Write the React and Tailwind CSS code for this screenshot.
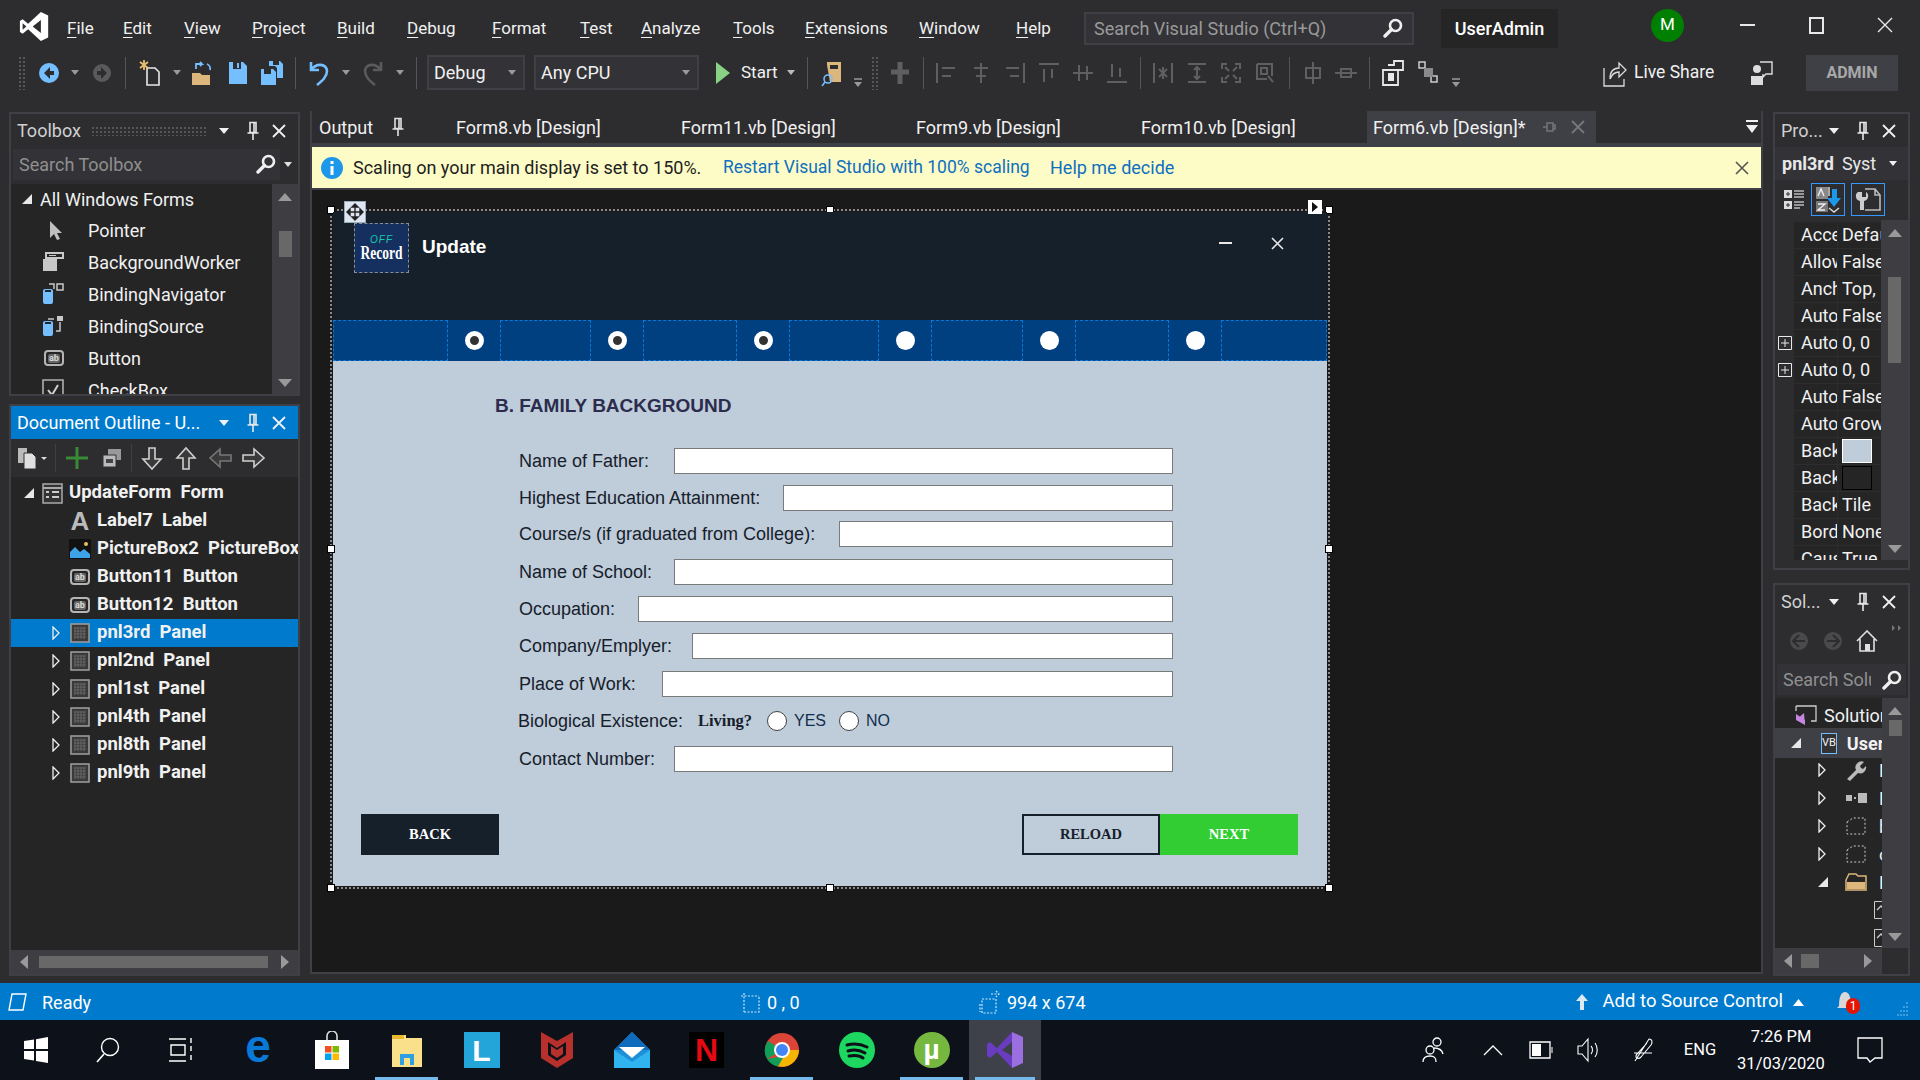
import React from "react";

const Svg = ({ w = 20, h = 20, vb, children, className = "" }) => (
  <svg width={w} height={h} viewBox={vb || `0 0 ${w} ${h}`} fill="none" className={`shrink-0 ${className}`}>{children}</svg>
);
const Caret = ({ c = "#d0d0d0", w = 10, h = 6 }) => <Svg w={w} h={h}><path d={`M0 0H${w}L${w / 2} ${h}z`} fill={c} /></Svg>;
const Pin = ({ c = "#e8e8e8" }) => (
  <Svg w={14} h={20}><path d="M4 1.5h6v10H4zM1.5 12h11M7 12v7M8 2v9" stroke={c} strokeWidth="1.6" /></Svg>
);
const Close = ({ c = "#f0f0f0", s = 14, sw = 1.8 }) => (
  <Svg w={s} h={s}><path d={`M1 1L${s - 1} ${s - 1}M${s - 1} 1L1 ${s - 1}`} stroke={c} strokeWidth={sw} /></Svg>
);
const Mag = ({ s = 20 }) => (
  <Svg w={s} h={s} vb="0 0 20 20"><circle cx="12.5" cy="7.5" r="5.5" stroke="#f0f0f0" strokeWidth="2.6" /><path d="M8.5 11.5L2 18" stroke="#f0f0f0" strokeWidth="3.4" strokeLinecap="round" /></Svg>
);
const Grip = ({ className = "" }) => (
  <div className={`bg-[radial-gradient(#55555a_1px,transparent_1px)] bg-[length:4px_4px] ${className}`} />
);
const S = ({ className = "", children }) => <div className={`flex items-center justify-center shrink-0 ${className}`}>{children}</div>;
const Sep = ({ className = "" }) => <S className={className}><div className="w-px h-[32px] bg-[#555558]" /></S>;
const SmallDrop = () => (
  <Svg w={10} h={16}><path d="M1 7h8" stroke="#999" strokeWidth="1.5" /><path d="M1 10h8l-4 5z" fill="#999" /></Svg>
);
const GCaret = ({ c = "#999" }) => <Caret c={c} w={8} h={5} />;

const Grey = ({ d, fill }) => (
  <Svg w={24} h={24}><path d={d} stroke="#5f5f62" strokeWidth="2" fill={fill || "none"} /></Svg>
);

function VSLogo({ s = 34, a = "#fff" }) {
  return (
    <Svg w={s} h={s} vb="0 0 34 34">
      <path d="M24 1L32 5V29L24 33L10 20L4 25L1 23V11L4 9L10 14zM24 10L15 17L24 24z" fill={a} fillRule="evenodd" />
      <path d="M4 13.5V20.5L8 17z" fill="#2d2d30" />
    </Svg>
  );
}

const Menu = [
  ["F", "ile", "", "w-[56px]"], ["E", "dit", "", "w-[61px]"], ["V", "iew", "", "w-[68px]"], ["P", "roject", "", "w-[85px]"],
  ["B", "uild", "", "w-[70px]"], ["D", "ebug", "", "w-[85px]"], ["F", "ormat", "", "w-[88px]"], ["T", "est", "", "w-[61px]"],
  ["A", "nalyze", "", "w-[92px]"], ["T", "ools", "", "w-[72px]"], ["E", "xtensions", "", "w-[114px]"], ["W", "indow", "", "w-[97px]"], ["H", "elp", "", "w-[68px]"],
];

function TitleBar() {
  return (
    <div className="flex items-center h-[50px] shrink-0 pl-[19px]">
      <div className="mt-[2px]"><VSLogo s={31} /></div>
      <div className="flex ml-[17px] mt-[8px] text-[#f1f1f1] text-[17px]">
        {Menu.map(([a, b, , w], i) => (
          <div key={i} className={`${w} shrink-0`}><span className="underline underline-offset-[3px] decoration-1">{a}</span>{b}</div>
        ))}
      </div>
      <div className="flex items-center justify-between mt-[6px] w-[330px] h-[33px] border-2 border-[#3f3f46] bg-[#333337] pl-[8px] pr-[9px] text-[#9a9a9a] text-[18px] shrink-0">
        <span>Search Visual Studio (Ctrl+Q)</span><Mag />
      </div>
      <div className="ml-[27px] mt-[7px] w-[117px] h-[39px] bg-[#252526] text-white font-medium text-[18px] flex items-center justify-center shrink-0">UserAdmin</div>
      <div className="ml-[93px] w-[33px] h-[33px] rounded-full bg-[#008000] text-white text-[17px] flex items-center justify-center shrink-0">M</div>
      <S className="ml-[53px] w-[20px]"><div className="w-[15px] h-[2px] bg-[#e8e8e8]" /></S>
      <S className="ml-[49px] w-[20px]"><div className="w-[15px] h-[17px] border-2 border-[#e8e8e8]" /></S>
      <S className="ml-[49px] w-[20px]"><Close s={16} c="#e8e8e8" sw={1.4} /></S>
    </div>
  );
}

function Toolbar() {
  return (
    <div className="flex items-center h-[45px] shrink-0 pl-[16px] text-[#f1f1f1] text-[18px]">
      <S className="w-[12px]"><Grip className="w-[8px] h-[34px]" /></S>
      <S className="w-[26px] ml-[8px]">
        <Svg w={22} h={22}><circle cx="11" cy="11" r="10" fill="#75beff" /><path d="M12 5L6 11l6 6v-4h4V9h-4z" fill="#2d2d30" /></Svg>
      </S>
      <S className="w-[26px]"><GCaret /></S>
      <S className="w-[28px]"><Svg w={20} h={20}><circle cx="10" cy="10" r="9" fill="#5a5a5c" /><path d="M9 4l6 6-6 6v-4H5V8h4z" fill="#2d2d30" /></Svg></S>
      <Sep className="w-[18px]" />
      <S className="w-[32px]">
        <Svg w={22} h={28}><path d="M8 9h8l4 4v13H8z" stroke="#e8e8e8" strokeWidth="1.6" /><path d="M5 1v10M1 3l8 6M9 3l-8 6" stroke="#e8c070" strokeWidth="1.8" /></Svg>
      </S>
      <S className="w-[22px]"><GCaret /></S>
      <S className="w-[30px]">
        <Svg w={24} h={28}><path d="M1 14h8l2 2h8v10H1z" fill="#dcb67a" /><path d="M5 10V5h6l-2-2M11 5l-2 2M16 5a5 5 0 0 1 3 6" stroke="#75beff" strokeWidth="1.8" /></Svg>
      </S>
      <S className="w-[40px]">
        <Svg w={20} h={24}><path d="M1 1h14l4 4v18H1z" fill="#75beff" /><path d="M5 1h8v7H5z" fill="#2d2d30" /><path d="M9 2h2v5H9z" fill="#75beff" /></Svg>
      </S>
      <S className="w-[28px]">
        <Svg w={24} h={26}><path d="M1 9h12l3 3v13H1z" fill="#75beff" /><path d="M9 1h11l3 3v14h-6V8L15 6H9z" fill="#75beff" /><path d="M4 9h7v5H4zM13 1h6v4h-6z" fill="#2d2d30" /></Svg>
      </S>
      <Sep className="w-[18px]" />
      <S className="w-[30px]">
        <Svg w={22} h={28}><path d="M3 3v8h8M3 11C8 4 18 4 19 12c0 6-5 10-10 14" stroke="#75beff" strokeWidth="2.6" /></Svg>
      </S>
      <S className="w-[24px]"><GCaret /></S>
      <S className="w-[30px]">
        <Svg w={22} h={28}><path d="M19 3v8h-8M19 11C14 4 4 4 3 12c0 6 5 10 10 14" stroke="#5a5a5c" strokeWidth="2.6" /></Svg>
      </S>
      <S className="w-[24px]"><GCaret /></S>
      <Sep className="w-[8px]" />
      <div className="ml-[7px] w-[98px] h-[35px] border-2 border-[#3f3f46] bg-[#333337] flex items-center justify-between pl-[5px] pr-[7px] shrink-0"><span>Debug</span><GCaret /></div>
      <div className="ml-[9px] w-[165px] h-[35px] border-2 border-[#3f3f46] bg-[#333337] flex items-center justify-between pl-[5px] pr-[7px] shrink-0"><span>Any CPU</span><GCaret /></div>
      <S className="ml-[15px] w-[17px]"><Svg w={14} h={22}><path d="M0 0L14 11L0 22z" fill="#89d185" /></Svg></S>
      <div className="ml-[10px] w-[43px] shrink-0 text-[17px]">Start</div>
      <S className="w-[14px]"><GCaret c="#bbb" /></S>
      <Sep className="w-[18px]" />
      <S className="w-[32px]">
        <Svg w={22} h={28}><path d="M6 6V3h14v20H9" fill="#dcb67a" /><path d="M9 6h8v4H9z" fill="#2d2d30" /><circle cx="7" cy="20" r="4" stroke="#75beff" strokeWidth="1.6" /><path d="M4 23l-3 4" stroke="#75beff" strokeWidth="1.6" /></Svg>
      </S>
      <S className="w-[20px] pt-[14px]"><SmallDrop /></S>
      <S className="w-[14px]"><Grip className="w-[8px] h-[34px]" /></S>
      <S className="w-[36px]"><Svg w={20} h={24}><path d="M10 1v22M1 11h18" stroke="#5f5f62" strokeWidth="5" /></Svg></S>
      <Sep className="w-[10px]" />
      {[
        "M3 2v20M8 7h13M8 15h9", "M12 2v20M5 7h14M7 15h10", "M21 2v20M3 7h13M7 15h9", "M2 3h20M7 8v13M15 8v9", "M2 12h20M8 4v16M16 5v14", "M2 21h20M7 3v13M15 7v9",
      ].map((d, i) => <S key={i} className={i === 0 ? "w-[36px]" : "w-[34px]"}><Grey d={d} /></S>)}
      <Sep className="w-[12px]" />
      {[
        "M3 2v20M21 2v20M12 6v12M8 8l8 8M16 8l-8 8", "M3 3h18M3 21h18M12 6v12M9 9l3-3 3 3M9 15l3 3 3-3", "M3 8V3h5M21 8V3h-5M3 16v5h5M21 16v5h-5M6 6l4 4M18 6l-4 4M6 18l4-4M18 18l-4-4", "M4 3h15v12M4 3v15h10M15 15l5 6M8 7h6v6H8z",
      ].map((d, i) => <S key={i} className="w-[34px]"><Grey d={d} /></S>)}
      <Sep className="w-[14px]" />
      <S className="w-[33px]"><Grey d="M12 1v22M5 7h14v10H5z" /></S>
      <S className="w-[34px]"><Grey d="M1 12h22M7 8h10v8H7z" /></S>
      <Sep className="w-[12px]" />
      <S className="w-[36px]">
        <Svg w={24} h={28}><path d="M7 6h6V2h9v9h-5M2 11h15v15H2z" stroke="#e8e8e8" strokeWidth="1.8" /><path d="M7 14h6v8H7z" fill="#e8e8e8" /></Svg>
      </S>
      <S className="w-[35px]">
        <Svg w={22} h={28}><path d="M1 3h6v6H1zM13 17h6v6h-6z" stroke="#ccc" strokeWidth="1.5" /><path d="M6 9h9v9H6z" fill="#8a8a8a" /></Svg>
      </S>
      <S className="w-[20px] pt-[14px]"><SmallDrop /></S>
      <S className="ml-[136px] w-[26px]">
        <Svg w={24} h={30}><path d="M1 10v18h20V21M7 21c0-8 4-11 9-11V5l7 7-7 7v-5c-4 0-7 2-9 7z" stroke="#dcdcdc" strokeWidth="1.3" /></Svg>
      </S>
      <div className="ml-[6px] w-[116px] shrink-0 text-[17.5px]">Live Share</div>
      <S className="w-[24px]">
        <Svg w={24} h={28}><path d="M10 3h12v12h-6l-3 3v-3" stroke="#dcdcdc" strokeWidth="1.4" /><circle cx="7" cy="10" r="4" fill="#dcdcdc" /><path d="M1 17h12v9H1z" fill="#dcdcdc" /></Svg>
      </S>
      <div className="ml-[32px] w-[92px] h-[36px] bg-[#3f3f46] text-[#a8a8a8] font-bold text-[16px] flex items-center justify-center shrink-0">ADMIN</div>
    </div>
  );
}

function PanelHead({ title, active, grip }) {
  return (
    <div className={`flex items-center h-[33px] shrink-0 ${active ? "bg-[#007acc] text-white" : "bg-[#2d2d30] text-[#d0d0d0]"} text-[18px]`}>
      <span className="ml-[6px] whitespace-nowrap shrink-0">{title}</span>
      {grip && <Grip className="ml-[10px] w-[115px] h-[10px]" />}
      <div className="ml-auto flex items-center mr-[12px]">
        <Caret c="#f0f0f0" />
        <div className="ml-[17px]"><Pin /></div>
        <div className="ml-[12px]"><Close /></div>
      </div>
    </div>
  );
}

const AB = () => (
  <div className="w-[20px] h-[16px] rounded-[4px] border-2 border-[#b5b5b5] flex items-center justify-center shrink-0">
    <span className="text-[9px] leading-none font-bold text-[#d8d8d8] bg-[#666] rounded-[2px] px-[1px]">ab</span>
  </div>
);

const ToolIcon = ({ kind }) => {
  if (kind === "pointer") return <Svg w={16} h={20}><path d="M2 1l12 12H9l3 6-3 1-3-6-4 4z" fill="#c0c0c0" /></Svg>;
  if (kind === "bg") return <Svg w={22} h={22}><path d="M3 1h19v7H15v12H1V8h2z" fill="#c8c8c8" /><path d="M5 3h15v3H5z" fill="#252526" /><path d="M7 4h7v1H7z" fill="#c8c8c8" /></Svg>;
  if (kind === "nav") return <Svg w={22} h={22}><rect x="1" y="6" width="10" height="15" rx="2" fill="#75beff" /><path d="M3 8h6" stroke="#252526" strokeWidth="2" /><path d="M7 1h5v5M15 1h6v6h-6z" stroke="#c8c8c8" strokeWidth="1.5" /></Svg>;
  if (kind === "src") return <Svg w={22} h={22}><rect x="1" y="6" width="10" height="15" rx="2" fill="#75beff" /><path d="M3 8h6" stroke="#252526" strokeWidth="2" /><path d="M15 1h6v5h-6z" fill="#c8c8c8" /><path d="M18 7v9h-4M6 4h6" stroke="#c8c8c8" strokeWidth="1.5" /></Svg>;
  if (kind === "button") return <AB />;
  return <Svg w={22} h={22}><path d="M1 1h20v20H1z" stroke="#b0b0b0" strokeWidth="1.6" /><path d="M6 11l4 5 6-10" stroke="#d0d0d0" strokeWidth="2" /></Svg>;
};

function ScrollV({ className, top, thumb, color = "bg-[#686868]" }) {
  return (
    <div className={`${className} bg-[#3e3e42] flex flex-col items-center shrink-0 relative pt-[9px]`}>
      <Svg w={14} h={8}><path d="M7 0L14 8H0z" fill="#999" /></Svg>
      <div className={`${top} ${thumb} w-[13px] ${color}`} />
      <div className="absolute bottom-[7px]"><Svg w={14} h={8}><path d="M0 0H14L7 8z" fill="#999" /></Svg></div>
    </div>
  );
}

function Toolbox() {
  const items = [["pointer", "Pointer"], ["bg", "BackgroundWorker"], ["nav", "BindingNavigator"], ["src", "BindingSource"], ["button", "Button"], ["cb", "CheckBox"]];
  return (
    <div className="flex flex-col h-[284px] border-2 border-[#3f3f46] shrink-0 overflow-hidden">
      <PanelHead title="Toolbox" grip />
      <div className="flex items-center h-[34px] bg-[#2d2d30] shrink-0">
        <div className="flex items-center justify-between w-[267px] h-[31px] bg-[#333337] ml-[2px] pl-[6px] pr-[4px] text-[#8f8f8f] text-[18px]"><span>Search Toolbox</span><Mag /></div>
        <div className="ml-[4px]"><Caret c="#e0e0e0" w={8} h={5} /></div>
      </div>
      <div className="flex flex-1 min-h-0 mt-[3px]">
        <div className="flex-1 bg-[#252526] text-[#f1f1f1] text-[18px] overflow-hidden">
          <div className="flex items-center h-[30px] pl-[11px]">
            <Svg w={10} h={10}><path d="M10 0V10H0z" fill="#e8e8e8" /></Svg>
            <span className="ml-[8px]">All Windows Forms</span>
          </div>
          {items.map(([k, t]) => (
            <div key={t} className="flex items-center h-[32px]">
              <div className="w-[53px] flex justify-end shrink-0"><ToolIcon kind={k} /></div>
              <span className="ml-[24px]">{t}</span>
            </div>
          ))}
        </div>
        <ScrollV className="w-[26px]" top="mt-[30px]" thumb="h-[26px]" />
      </div>
    </div>
  );
}

const PanelGlyph = () => (
  <Svg w={20} h={20}><rect x="1" y="1" width="18" height="18" stroke="#999" strokeWidth="1.6" fill="#3a3a3a" /><path d="M4 5h12M4 8h12M4 11h12M4 14h12M5 4v12M8 4v12M11 4v12M14 4v12" stroke="#666" strokeWidth="1" /></Svg>
);
const RightTri = () => <Svg w={8} h={14}><path d="M1 1L7 7L1 13z" stroke="#f0f0f0" strokeWidth="1.3" /></Svg>;

function Outline() {
  const Row = ({ arrow, tri, icon, text, sel, indent = "pl-[58px]" }) => (
    <div className={`flex items-center h-[28px] font-bold text-[18.5px] text-[#f1f1f1] relative ${sel ? "bg-[#007acc]" : ""} ${indent}`}>
      {arrow && <div className="absolute left-[41px] top-[7px]"><RightTri /></div>}
      {tri && <div className="absolute left-[13px] top-[9px]"><Svg w={10} h={10}><path d="M10 0V10H0z" fill="#e8e8e8" /></Svg></div>}
      <div className="w-[22px] flex justify-center shrink-0">{icon}</div>
      <span className="ml-[6px] whitespace-pre">{text}</span>
    </div>
  );
  const arrows = [
    "M9 2h6v11h6L12 23 3 13h6z",
    "M9 23h6V12h6L12 2 3 12h6z",
    "M23 9v6H12v6L2 12l10-9v6z",
    "M1 9v6h11v6l10-9-10-9v6z",
  ];
  return (
    <div className="flex flex-col h-[572px] border-2 border-[#3f3f46] mt-[8px] shrink-0 overflow-hidden">
      <PanelHead title="Document Outline - U..." active />
      <div className="flex items-center h-[38px] bg-[#2d2d30] shrink-0 pl-[6px]">
        <Svg w={32} h={24}><path d="M1 2h9v15H1z" fill="#bbb" /><path d="M7 7h8l4 4v12H7z" fill="#e0e0e0" stroke="#333" /><path d="M24 11h6l-3 3z" fill="#ddd" /></Svg>
        <div className="w-px h-[28px] bg-[#3f3f46] ml-[6px]" />
        <div className="ml-[9px]"><Svg w={24} h={24}><path d="M12 1v22M1 12h22" stroke="#388a34" strokeWidth="3" /></Svg></div>
        <div className="ml-[13px]"><Svg w={20} h={20}><path d="M6 1h13v11H6z" fill="#999" /><path d="M1 7h13v12H1z" fill="#bbb" stroke="#333" /><path d="M4 11h7v4H4z" fill="#444" /></Svg></div>
        <div className="w-px h-[28px] bg-[#3f3f46] ml-[9px]" />
        {arrows.map((d, i) => (
          <div key={i} className={i === 0 ? "ml-[8px]" : "ml-[10px]"}>
            <Svg w={24} h={24}><path d={d} fill="#3a3a3a" stroke={i === 2 ? "#777" : "#cfcfcf"} strokeWidth="1.6" /></Svg>
          </div>
        ))}
      </div>
      <div className="flex-1 bg-[#252526] flex flex-col min-h-0">
        <div className="pt-[2px] flex-1 overflow-hidden">
          <Row indent="pl-[30px]" tri icon={<Svg w={21} h={21}><rect x="1" y="1" width="19" height="19" stroke="#aaa" strokeWidth="1.5" fill="#333" /><path d="M1 5h19" stroke="#aaa" strokeWidth="2" /><path d="M4 9h3M4 14h3M10 9h7M10 14h7" stroke="#ccc" strokeWidth="2.2" /></Svg>} text="UpdateForm  Form" />
          <Row icon={<span className="text-[26px] leading-none font-bold text-[#bbb] font-['Liberation_Sans',Arial,sans-serif]">A</span>} text="Label7  Label" />
          <Row icon={<Svg w={22} h={20}><path d="M0 0h22v20H0z" fill="#111" /><path d="M1 19v-6l5-5 5 5 4-3 6 5v4z" fill="#3ea2e8" /><circle cx="17" cy="5" r="2" fill="#e8c060" /></Svg>} text="PictureBox2  PictureBox" />
          <Row icon={<AB />} text="Button11  Button" />
          <Row icon={<AB />} text="Button12  Button" />
          {["pnl3rd", "pnl2nd", "pnl1st", "pnl4th", "pnl8th", "pnl9th"].map((n, i) => (
            <Row key={n} arrow sel={i === 0} icon={<PanelGlyph />} text={`${n}  Panel`} />
          ))}
        </div>
        <div className="flex items-center h-[24px] bg-[#3e3e42] shrink-0 px-[9px]">
          <Svg w={8} h={14}><path d="M8 0V14L0 7z" fill="#999" /></Svg>
          <div className="ml-[11px] w-[229px] h-[12px] bg-[#686868]" />
          <div className="ml-auto"><Svg w={8} h={14}><path d="M0 0V14L8 7z" fill="#999" /></Svg></div>
        </div>
      </div>
    </div>
  );
}

function Tabs() {
  const tabs = [
    ["Form8.vb [Design]", "w-[225px]"], ["Form11.vb [Design]", "w-[235px]"], ["Form9.vb [Design]", "w-[225px]"], ["Form10.vb [Design]", "w-[227px]"],
  ];
  return (
    <div className="flex items-center h-[32px] shrink-0 text-[#f1f1f1] text-[18px] relative">
      <span className="ml-[7px] w-[72px] shrink-0">Output</span>
      <div className="w-[65px] shrink-0"><Pin c="#e0e0e0" /></div>
      {tabs.map(([t, w]) => <div key={t} className={`${w} shrink-0 whitespace-nowrap`}>{t}</div>)}
      <div className="flex items-center bg-[#3f3f46] h-[32px] w-[229px] pl-[6px] -ml-[1px] shrink-0 whitespace-nowrap">
        <span className="w-[163px] shrink-0">Form6.vb [Design]*</span>
        <div className="ml-[6px] opacity-50"><Svg w={14} h={14}><path d="M1 7h4M5 3h6v8H5zM11 5h2v4h-2z" stroke="#aaa" strokeWidth="1.5" /></Svg></div>
        <div className="ml-[15px]"><Close c="#77777b" s={14} sw={1.8} /></div>
      </div>
      <div className="ml-auto mr-[3px]"><Svg w={12} h={14}><path d="M0 1h12" stroke="#f0f0f0" strokeWidth="2" /><path d="M0 5h12L6 13z" fill="#f0f0f0" /></Svg></div>
    </div>
  );
}

function Notice() {
  return (
    <div className="flex items-center h-[41px] bg-[#fdfbc6] shrink-0 text-[18px] text-[#1e1e1e]">
      <div className="ml-[9px]">
        <Svg w={22} h={22}><circle cx="11" cy="11" r="11" fill="#1c97ea" /><path d="M9.500 9h3v9h-3zM9.500 4h3v3h-3z" fill="#fff" /></Svg>
      </div>
      <span className="ml-[10px] w-[350px] shrink-0 whitespace-nowrap">Scaling on your main display is set to 150%.</span>
      <span className="ml-[20px] w-[307px] shrink-0 whitespace-nowrap text-[17.5px] text-[#0e70c0]">Restart Visual Studio with 100% scaling</span>
      <span className="ml-[20px] text-[#0e70c0]">Help me decide</span>
      <div className="ml-auto mr-[12px]"><Close c="#555" s={14} sw={1.6} /></div>
    </div>
  );
}

const Handle = ({ className }) => <div className={`absolute w-[8px] h-[8px] bg-white border border-black ${className}`} />;

const FieldRows = [
  ["Name of Father:", "w-[499px]", "mt-[30px]"],
  ["Highest Education Attainment:", "w-[390px]", "mt-[11px]"],
  ["Course/s (if graduated from College):", "w-[334px]", "mt-[10px]"],
  ["Name of School:", "w-[499px]", "mt-[12px]"],
  ["Occupation:", "w-[535px]", "mt-[11px]"],
  ["Company/Emplyer:", "w-[481px]", "mt-[11px]"],
  ["Place of Work:", "w-[511px]", "mt-[12px]"],
];

const Field = ({ label, w, mt }) => (
  <div className={`flex items-center justify-between h-[26px] ${mt}`}>
    <span className="whitespace-nowrap pt-[1px]">{label}</span>
    <div className={`${w} h-[26px] bg-white border border-[#7a7a7a] shrink-0`} />
  </div>
);

const Radio = () => <div className="w-[20px] h-[20px] rounded-full bg-white border border-[#444] shrink-0" />;

function Step({ on }) {
  return (
    <div className="w-[52px] flex items-center justify-center shrink-0">
      {on ? <div className="w-[19px] h-[19px] rounded-full bg-[#333] border-[5px] border-white" /> : <div className="w-[19px] h-[19px] rounded-full bg-white" />}
    </div>
  );
}
const Seg = ({ w }) => <div className={`${w} h-full border border-dashed border-[#0a78d8] shrink-0`} />;

function FormDesign() {
  return (
    <div className="relative w-[994px] h-[674px] outline-[2px] outline-dotted outline-[#8a8a8a] outline-offset-[1px] font-['Liberation_Sans',Arial,sans-serif]">
      <Handle className="-left-[6px] -top-[6px]" />
      <Handle className="left-[493px] -top-[6px]" />
      <Handle className="-right-[6px] -top-[6px]" />
      <Handle className="-left-[6px] top-[333px]" />
      <Handle className="-right-[6px] top-[333px]" />
      <Handle className="-left-[6px] -bottom-[6px]" />
      <Handle className="left-[493px] -bottom-[6px]" />
      <Handle className="-right-[6px] -bottom-[6px]" />
      <div className="absolute left-[11px] -top-[11px] w-[22px] h-[22px] z-10 bg-[#dfe6f2] border border-[#9ab] flex items-center justify-center">
        <Svg w={18} h={18}><path d="M9 1v16M1 9h16M9 1l-3 3h6zM9 17l-3-3h6zM1 9l3-3v6zM17 9l-3-3v6z" stroke="#222" strokeWidth="1.4" fill="#222" /></Svg>
      </div>
      <div className="absolute right-[5px] -top-[12px] w-[14px] h-[14px] bg-white flex items-center justify-center z-10">
        <Svg w={8} h={10}><path d="M1 0L7 5L1 10z" fill="#111" /></Svg>
      </div>

      <div className="h-[108px] bg-[#16202b] flex pl-[21px] pt-[11px] relative">
        <div className="w-[55px] h-[50px] bg-[#15305f] border border-dashed border-[#8a8f96] flex flex-col items-center justify-center leading-none shrink-0">
          <span className="text-[10px] italic text-[#19c8a8] tracking-[1px]">OFF</span>
          <span className="text-[13.5px] font-bold text-white font-['Liberation_Serif',serif] scale-y-[1.35] mt-[2px]">Record</span>
        </div>
        <span className="ml-[13px] mt-[13px] text-[19px] font-bold text-white h-[22px] leading-[22px]">Update</span>
        <div className="ml-auto flex items-start pt-[14px] pr-[43px]">
          <div className="w-[13px] h-[2px] bg-[#e8e8e8] mt-[5px]" />
          <div className="ml-[39px]"><Close c="#e8e8e8" s={13} sw={1.6} /></div>
        </div>
      </div>

      <div className="h-[41px] bg-[#004080] flex">
        <Seg w="w-[115px]" /><Step on /><Seg w="w-[91px]" /><Step on /><Seg w="w-[94px]" /><Step on /><Seg w="w-[90px]" /><Step /><Seg w="w-[92px]" /><Step /><Seg w="w-[94px]" /><Step /><Seg w="flex-1" />
      </div>

      <div className="h-[525px] bg-[#bfccd9] flex flex-col">
        <div className="ml-[162px] mt-[33px] h-[24px] leading-[24px] text-[19px] font-bold text-[#2c2c4e]">B. FAMILY BACKGROUND</div>
        <div className="ml-[186px] w-[654px] text-[18px] text-[#16202b]">
          {FieldRows.map(([l, w, mt]) => <Field key={l} label={l} w={w} mt={mt} />)}
          <div className="flex items-center h-[26px] mt-[11px] -ml-[1px]">
            <span className="whitespace-nowrap w-[180px] shrink-0 pt-[1px]">Biological Existence:</span>
            <span className="font-['Liberation_Serif',serif] font-bold text-[16.5px] w-[69px] shrink-0 pt-[1px]">Living?</span>
            <Radio />
            <span className="ml-[7px] w-[45px] text-[16px] text-[#0f2f4f] shrink-0">YES</span>
            <Radio />
            <span className="ml-[7px] text-[16px] text-[#0f2f4f]">NO</span>
          </div>
          <Field label="Contact Number:" w="w-[499px]" mt="mt-[12px]" />
        </div>
        <div className="flex justify-between pl-[28px] pr-[29px] mt-[42px] font-['Liberation_Serif',serif] font-bold text-[14.5px]">
          <div className="w-[138px] h-[41px] pt-[1px] bg-[#16202b] text-white flex items-center justify-center">BACK</div>
          <div className="flex">
            <div className="w-[138px] h-[41px] pt-[1px] border-2 border-[#16202b] text-[#16202b] flex items-center justify-center">RELOAD</div>
            <div className="w-[138px] h-[41px] pt-[1px] bg-[#32cd32] text-white flex items-center justify-center">NEXT</div>
          </div>
        </div>
      </div>
    </div>
  );
}

function Properties() {
  const rows = [
    ["Acce", "Defau"], ["Allow", "False"], ["Anch", "Top, l"], ["Auto", "False"], ["Auto", "0, 0", 1], ["Auto", "0, 0", 1], ["Auto", "False"], ["Auto", "Grow"],
    ["Back", "", 0, "bg-[#bfccd9]"], ["Back", "", 0, "bg-[#252526]"], ["Back", "Tile"], ["Bord", "None"], ["Caus", "True"],
  ];
  return (
    <div className="flex flex-col h-[458px] border-2 border-[#3f3f46] shrink-0 overflow-hidden">
      <PanelHead title="Pro..." />
      <div className="flex items-center h-[33px] bg-[#333337] shrink-0 text-[18px] text-[#e8e8e8]">
        <span className="ml-[7px] font-bold">pnl3rd</span>
        <span className="ml-[8px]">Syst</span>
        <div className="ml-auto mr-[11px]"><Caret c="#f0f0f0" w={8} h={5} /></div>
      </div>
      <div className="flex items-center h-[38px] bg-[#2d2d30] shrink-0 pl-[8px]">
        <Svg w={22} h={22}><path d="M1 2h8v8H1zM1 13h8v8H1z" fill="#ddd" /><path d="M3 6h4M5 4v4M3 17h4M5 15v4" stroke="#2d2d30" /><path d="M11 3h10M11 6h10M11 9h10M11 14h10M11 17h10M11 20h6" stroke="#bbb" strokeWidth="1.6" /></Svg>
        <div className="ml-[6px] w-[34px] h-[33px] border border-[#3399ff] flex items-center justify-center">
          <Svg w={28} h={27}><rect x="2" y="1" width="12" height="12" fill="#888" /><rect x="2" y="15" width="12" height="11" fill="#777" /><path d="M4 10l3-7 3 7M4 18h7l-7 6h7" stroke="#eee" strokeWidth="1.4" /><path d="M15 1v9" stroke="#ddd" strokeWidth="1.4" /><path d="M18 3h5v9h4l-7 9-7-9h5z" fill="#1c97ea" /><path d="M15 22l5 4 5-4" stroke="#ddd" strokeWidth="1.4" /></Svg>
        </div>
        <div className="ml-[6px] w-[34px] h-[33px] border border-[#3399ff] flex items-center justify-center">
          <Svg w={28} h={27}><path d="M11 3h10l5 6v15H11M21 3v6h5" stroke="#bbb" strokeWidth="1.6" /><path d="M4 6a5 5 0 0 0 2 9v9h4v-9a5 5 0 0 0 2-9v5H8V6z" fill="#ccc" /></Svg>
        </div>
      </div>
      <div className="flex flex-1 min-h-0 mt-[2px] bg-[#2d2d30]">
        <div className="flex-1 text-[#f1f1f1] text-[18px] overflow-hidden pt-[2px]">
          {rows.map(([a, b, plus, sw], i) => (
            <div key={i} className="flex h-[27px] border-b border-[#2d2d30] leading-[26px]">
              <div className="w-[19px] flex items-center justify-center shrink-0">
                {plus ? <Svg w={14} h={14}><path d="M.5.5h13v13H.5zM7 3v8M3 7h8" stroke="#e8e8e8" /></Svg> : null}
              </div>
              <div className="w-[44px] pl-[7px] bg-[#252526] overflow-hidden whitespace-nowrap shrink-0 border-r border-[#2d2d30]">{a}</div>
              <div className="flex-1 bg-[#252526] pl-[4px] overflow-hidden whitespace-nowrap flex items-center">
                {sw ? <div className={`w-[30px] h-[24px] border border-black ${sw === "bg-[#bfccd9]" ? "border-white bg-[#bfccd9]" : "bg-[#252526]"}`} /> : b}
              </div>
            </div>
          ))}
        </div>
        <ScrollV className="w-[27px]" top="mt-[40px]" thumb="h-[86px]" />
      </div>
      <div className="h-[8px] bg-[#2d2d30] shrink-0" />
    </div>
  );
}

function Solution() {
  const Dots = () => <Svg w={20} h={18}><path d="M1 5L7 1h12v16H1z" stroke="#ccc" strokeDasharray="2 2" /></Svg>;
  return (
    <div className="flex flex-col h-[393px] border-2 border-[#3f3f46] mt-[13px] shrink-0 overflow-hidden">
      <PanelHead title="Sol..." />
      <div className="flex items-center h-[46px] bg-[#2d2d30] shrink-0 pl-[14px] relative">
        <Svg w={20} h={20}><circle cx="10" cy="10" r="9" fill="#4a4a4c" /><path d="M10 4l-6 6 6 6M4 10h12" stroke="#2d2d30" strokeWidth="2" /></Svg>
        <div className="ml-[14px]"><Svg w={20} h={20}><circle cx="10" cy="10" r="9" fill="#4a4a4c" /><path d="M10 4l6 6-6 6M16 10H4" stroke="#2d2d30" strokeWidth="2" /></Svg></div>
        <div className="ml-[13px]"><Svg w={22} h={22}><path d="M1 11L11 1l10 10M4 9v12h14V9" stroke="#e0e0e0" strokeWidth="1.6" /><path d="M9 14h5v7H9z" fill="#e0e0e0" /></Svg></div>
        <div className="absolute right-[6px] top-[7px] flex gap-[2px]"><Svg w={10} h={6}><path d="M0 0l3 3-3 3zM6 0l3 3-3 3z" fill="#777" /></Svg></div>
      </div>
      <div className="flex items-center justify-between h-[31px] bg-[#333337] shrink-0 mx-[2px] pl-[6px] pr-[4px] text-[#8f8f8f] text-[18px] overflow-hidden">
        <span className="w-[88px] overflow-hidden whitespace-nowrap">Search Solution</span><Mag />
      </div>
      <div className="flex flex-1 min-h-0 mt-[3px]">
        <div className="flex-1 bg-[#252526] text-[#f1f1f1] text-[18px] overflow-hidden">
          <div className="flex items-center h-[30px] pt-[5px] pl-[20px] whitespace-nowrap">
            <Svg w={22} h={22}><path d="M1 1h20v15h-5M1 1v5" stroke="#ccc" strokeWidth="1.3" /><path d="M1 9l9 6v5l-9-5zM10 20l-9-5 8-7z" fill="#c586e0" /></Svg>
            <span className="ml-[7px]">Solution</span>
          </div>
          <div className="flex items-center h-[30px] bg-[#3f3f46] pl-[16px] whitespace-nowrap font-bold">
            <Svg w={10} h={10}><path d="M10 0V10H0z" fill="#e8e8e8" /></Svg>
            <div className="ml-[20px] w-[22px] h-[21px] border border-[#75beff] bg-[#333] text-[11px] flex items-center justify-center font-normal">VB</div>
            <span className="ml-[10px]">UserAdmin</span>
          </div>
          <div className="-mt-[2px]">
            {[
              [<Svg w={22} h={22}><path d="M2 20l9-9a6 6 0 0 1 8-8l-4 4 1 2 2 1 3-3a6 6 0 0 1-8 7l-8 8z" fill="#bbb" /></Svg>, "M"],
              [<Svg w={22} h={12}><path d="M1 3h6v6H1zM13 1h9v10h-9zM9 5h2v2H9z" fill="#bbb" /></Svg>, "R"],
              [<Dots />, "b"],
              [<Dots />, "o"],
            ].map(([ic, t], i) => (
              <div key={i} className="flex items-center h-[28px] pl-[43px]">
                <RightTri />
                <div className="w-[40px] flex justify-center ml-[10px] shrink-0">{ic}</div>
                <span className="ml-[3px]">{t}</span>
              </div>
            ))}
            <div className="flex items-center h-[28px] pl-[43px]">
              <Svg w={10} h={10}><path d="M10 0V10H0z" fill="#e8e8e8" /></Svg>
              <div className="w-[40px] flex justify-center ml-[8px] shrink-0"><Svg w={22} h={18}><path d="M1 7l3-6h7l2 2h8v14H1z" stroke="#dcb67a" strokeWidth="1.5" /><path d="M2 9h18v7H2z" fill="#dcb67a" /></Svg></div>
              <span className="ml-[3px]">F</span>
            </div>
            {[0, 1].map((i) => (
              <div key={i} className="flex items-center h-[28px] pl-[99px]">
                <Svg w={16} h={20}><path d="M.5 1.500h15v17H.5z" stroke="#ccc" /><path d="M3 10l4-4 6 6" stroke="#ccc" strokeWidth="1.4" /></Svg>
              </div>
            ))}
          </div>
        </div>
        <ScrollV className="w-[26px]" top="mt-[5px]" thumb="h-[16px]" />
      </div>
      <div className="flex h-[26px] shrink-0">
        <div className="flex-1 bg-[#3e3e42] flex items-center pl-[9px] pr-[10px]">
          <Svg w={8} h={14}><path d="M8 0V14L0 7z" fill="#999" /></Svg>
          <div className="ml-[9px] w-[18px] h-[14px] bg-[#686868]" />
          <div className="ml-auto"><Svg w={8} h={14}><path d="M0 0V14L8 7z" fill="#999" /></Svg></div>
        </div>
        <div className="w-[26px] bg-[#2d2d30] shrink-0" />
      </div>
    </div>
  );
}

function StatusBar() {
  return (
    <div className="flex items-center h-[37px] pt-[1px] bg-[#007acc] text-white text-[18px] shrink-0 relative">
      <div className="ml-[7px]"><Svg w={20} h={20}><path d="M5 2h14l-3 16H2z" stroke="#fff" strokeWidth="1.4" /></Svg></div>
      <span className="ml-[15px] w-[698px] shrink-0">Ready</span>
      <Svg w={20} h={22}><path d="M1 5h18M4 2v19M4 21h15V5" stroke="#cfe6f5" strokeWidth="1.2" strokeDasharray="2 1.5" /></Svg>
      <span className="ml-[7px] w-[212px] shrink-0">0 , 0</span>
      <Svg w={22} h={24}><path d="M3 9h14v14H3zM12 4h8M17 1l3 3-3 3M1 14v8" stroke="#cfe6f5" strokeWidth="1.2" strokeDasharray="2 1.5" /></Svg>
      <span className="ml-[6px]">994 x 674</span>
      <div className="ml-auto flex items-center mr-[11px]">
        <Svg w={14} h={18}><path d="M7 1L13 8H9V17H5V8H1z" fill="#dce9f2" /></Svg>
        <span className="ml-[14px] text-[18.5px]">Add to Source Control</span>
        <div className="ml-[10px]"><Svg w={11} h={7}><path d="M5.500 0L11 7H0z" fill="#fff" /></Svg></div>
        <div className="ml-[32px] relative w-[24px] h-[26px]">
          <Svg w={18} h={24}><path d="M3 17C3 8 5 3 9 3s6 5 6 14l2 2H1z" fill="#d8d8d8" /></Svg>
          <div className="absolute left-[10px] top-[9px] w-[14px] h-[16px] rounded-full bg-[#e51400] text-[12px] leading-[16px] text-center">1</div>
        </div>
        <div className="ml-[37px] mt-[14px]"><Svg w={12} h={14}><path d="M9 0h2v2H9zM6 4h2v2H6zM9 4h2v2H9zM3 8h2v2H3zM6 8h2v2H6zM9 8h2v2H9zM0 12h2v2H0zM3 12h2v2H3zM6 12h2v2H6zM9 12h2v2H9z" fill="#3c9edb" /></Svg></div>
      </div>
    </div>
  );
}

const TI = ({ active, bar, className = "w-[75px]", children }) => (
  <div className={`${className} h-[60px] flex items-center justify-center relative shrink-0 ${active ? "bg-[#3e414a]" : ""}`}>
    {children}
    {bar && <div className="absolute bottom-0 left-[6px] right-[6px] h-[3px] bg-[#76b9ed]" />}
  </div>
);

const VSBig = () => (
  <Svg w={36} h={36}>
    <path d="M25 0L36 5V31L25 36z" fill="#9b6fe0" />
    <path d="M25 0L10 16L3 10L0 12V24L3 26L10 20L25 36V24L15 18L25 10z" fill="#6a3cc0" />
  </Svg>
);

function Taskbar() {
  return (
    <div className="flex items-center h-[60px] bg-[#0c111a] text-white shrink-0">
      <TI className="w-[72px]"><Svg w={26} h={26}><path d="M1 4l10-1.500V12H1zM13 2.200L25 0v12H13zM1 14h10v9.500L1 22zM13 14h12v12l-12-2z" fill="#fff" /></Svg></TI>
      <TI className="w-[72px]"><Svg w={26} h={26}><circle cx="15" cy="10" r="8.500" stroke="#fff" strokeWidth="1.4" /><path d="M9 17L2 25" stroke="#fff" strokeWidth="1.6" /></Svg></TI>
      <TI className="w-[72px]"><Svg w={26} h={26}><path d="M2 2h17M2 24h17M4 8h14v10H4zM24 1v5M24 9v5M24 18v5" stroke="#fff" strokeWidth="1.4" /></Svg></TI>
      <TI className="w-[78px] pl-[6px]"><span className="text-[46px] leading-none font-bold text-[#0a78d7] font-['Liberation_Sans',sans-serif] -mt-[8px]">e</span></TI>
      <TI>
        <Svg w={34} h={38}><path d="M12 10V5a5 5 0 0 1 10 0v5" stroke="#ddd" strokeWidth="1.6" /><path d="M0 9h34v29H0z" fill="#fff" /><path d="M10 15h6.500v6.500H10z" fill="#f25022" /><path d="M17.500 15H24v6.500h-6.500z" fill="#7fba00" /><path d="M10 22.500h6.500V29H10z" fill="#00a4ef" /><path d="M17.500 22.500H24V29h-6.500z" fill="#ffb900" /></Svg>
      </TI>
      <TI bar>
        <Svg w={32} h={36}><path d="M1 3h14v3h16v29H1z" fill="#fbe08c" /><path d="M1 3h12v4H1z" fill="#e8b830" /><path d="M9 33V22h14v11h-4v-7h-6v7z" fill="#2e9fe0" /></Svg>
      </TI>
      <TI><div className="w-[36px] h-[36px] bg-[#24a5da] flex items-center justify-center text-white font-bold text-[30px] font-['Liberation_Sans',sans-serif]">L</div></TI>
      <TI><Svg w={32} h={36}><path d="M0 0l16 9 16-9v26L16 36 0 26z" fill="#b7302c" /><path d="M7 10l9 6 9-6v13l-9 6-9-6z" fill="#0c111a" /><path d="M10 14l6 4 6-4v8l-6 4-6-4z" fill="#b7302c" /></Svg></TI>
      <TI><Svg w={36} h={36}><path d="M18 0L36 18v18H0V18z" fill="#1e90d8" /><path d="M18 0L36 18H0z" fill="#0f6cbd" /><path d="M5 15h26L18 26z" fill="#fff" /><path d="M0 18l18 12 18-12v18H0z" fill="#2fb4f0" /></Svg></TI>
      <TI><div className="w-[35px] h-[36px] bg-black flex items-center justify-center text-[#e50914] font-bold text-[32px] font-['Liberation_Sans',sans-serif] leading-none">N</div></TI>
      <TI bar>
        <Svg w={36} h={36} vb="0 0 36 36"><circle cx="18" cy="18" r="17" fill="#db4437" /><path d="M18 18L3 27A17 17 0 0 1 4 9z" fill="#0f9d58" /><path d="M18 18H35A17 17 0 0 1 13 34z" fill="#f4b400" /><path d="M3 27A17 17 0 0 0 14 34.500L20 24z" fill="#0f9d58" /><circle cx="18" cy="18" r="8" fill="#fff" /><circle cx="18" cy="18" r="6" fill="#4285f4" /></Svg>
      </TI>
      <TI>
        <Svg w={36} h={36}><circle cx="18" cy="18" r="18" fill="#1ed760" /><path d="M8 13c7-2 14-1 20 2M9 19c6-2 12-1 17 2M10 24c5-1 10-1 14 2" stroke="#0c111a" strokeWidth="3" strokeLinecap="round" /></Svg>
      </TI>
      <TI bar>
        <div className="w-[36px] h-[36px] rounded-full bg-[#76b83f] flex items-center justify-center text-white font-bold text-[28px] font-['Liberation_Sans',sans-serif]">µ</div>
      </TI>
      <TI active bar className="w-[72px]"><VSBig /></TI>

      <div className="ml-auto flex items-center h-full relative">
        <S className="w-[30px]"><Svg w={24} h={26}><circle cx="9" cy="13" r="4" stroke="#fff" strokeWidth="1.3" /><circle cx="16" cy="5" r="4" stroke="#fff" strokeWidth="1.3" /><path d="M2 25c0-4 2-6 7-6s6 2 6 6M13 11c4 0 8 2 9 6" stroke="#fff" strokeWidth="1.3" /></Svg></S>
        <S className="w-[20px] ml-[35px]"><Svg w={20} h={11}><path d="M1 10L10 1l9 9" stroke="#fff" strokeWidth="1.3" /></Svg></S>
        <S className="w-[24px] ml-[26px]"><Svg w={24} h={18}><path d="M1 1h20v16H1z" stroke="#fff" strokeWidth="1.300" /><path d="M3 3h9v12H3z" fill="#fff" /><path d="M22 6h2v6h-2z" fill="#888" /></Svg></S>
        <S className="w-[24px] ml-[24px]"><Svg w={24} h={26}><path d="M1 9h4l6-7v22l-6-7H1zM14 9c2 2 2 6 0 8M18 6c3 4 3 10 0 14" stroke="#fff" strokeWidth="1.100" /></Svg></S>
        <S className="w-[24px] ml-[30px]"><Svg w={22} h={26}><path d="M3 24L17 2c3 0 4 3 2 6L9 20c-3 3-7 0-4-3L15 6M2 16h18" stroke="#fff" strokeWidth="1.100" /></Svg></S>
        <div className="w-[40px] ml-[25px] text-[16.5px] text-center">ENG</div>
        <div className="w-[100px] ml-[11px] text-[16.5px] text-center leading-[27px]">
          <div>7:26 PM</div>
          <div>31/03/2020</div>
        </div>
        <S className="w-[26px] ml-[26px] mr-[37px]"><Svg w={26} h={26}><path d="M1 1h24v20h-7l-5 4-3-4H1z" stroke="#fff" strokeWidth="1.300" /></Svg></S>
      </div>
    </div>
  );
}

export default function App() {
  return (
    <div className="w-[1920px] h-[1080px] overflow-hidden flex flex-col bg-[#2d2d30] font-[Roboto,'Noto_Sans',sans-serif]">
      <TitleBar />
      <Toolbar />
      <div className="h-[15px] shrink-0" />
      <div className="flex h-[873px] shrink-0 pl-[9px]">
        <div className="w-[291px] shrink-0 pt-[2px] flex flex-col">
          <Toolbox />
          <Outline />
        </div>
        <div className="w-[1453px] ml-[10px] mb-[9px] mt-[1px] shrink-0 flex flex-col border-x-2 border-b-2 border-[#3f3f46]">
          <Tabs />
          <div className="h-[4px] bg-[#3f3f46] shrink-0" />
          <Notice />
          <div className="h-[2px] bg-[#3f3f46] shrink-0" />
          <div className="flex-1 min-h-0 bg-[#1a1a1a] pl-[21px] pt-[22px] relative">
            <FormDesign />
          </div>
        </div>
        <div className="w-[137px] ml-[10px] shrink-0 pt-[2px] flex flex-col">
          <Properties />
          <Solution />
        </div>
      </div>
      <StatusBar />
      <Taskbar />
    </div>
  );
}
